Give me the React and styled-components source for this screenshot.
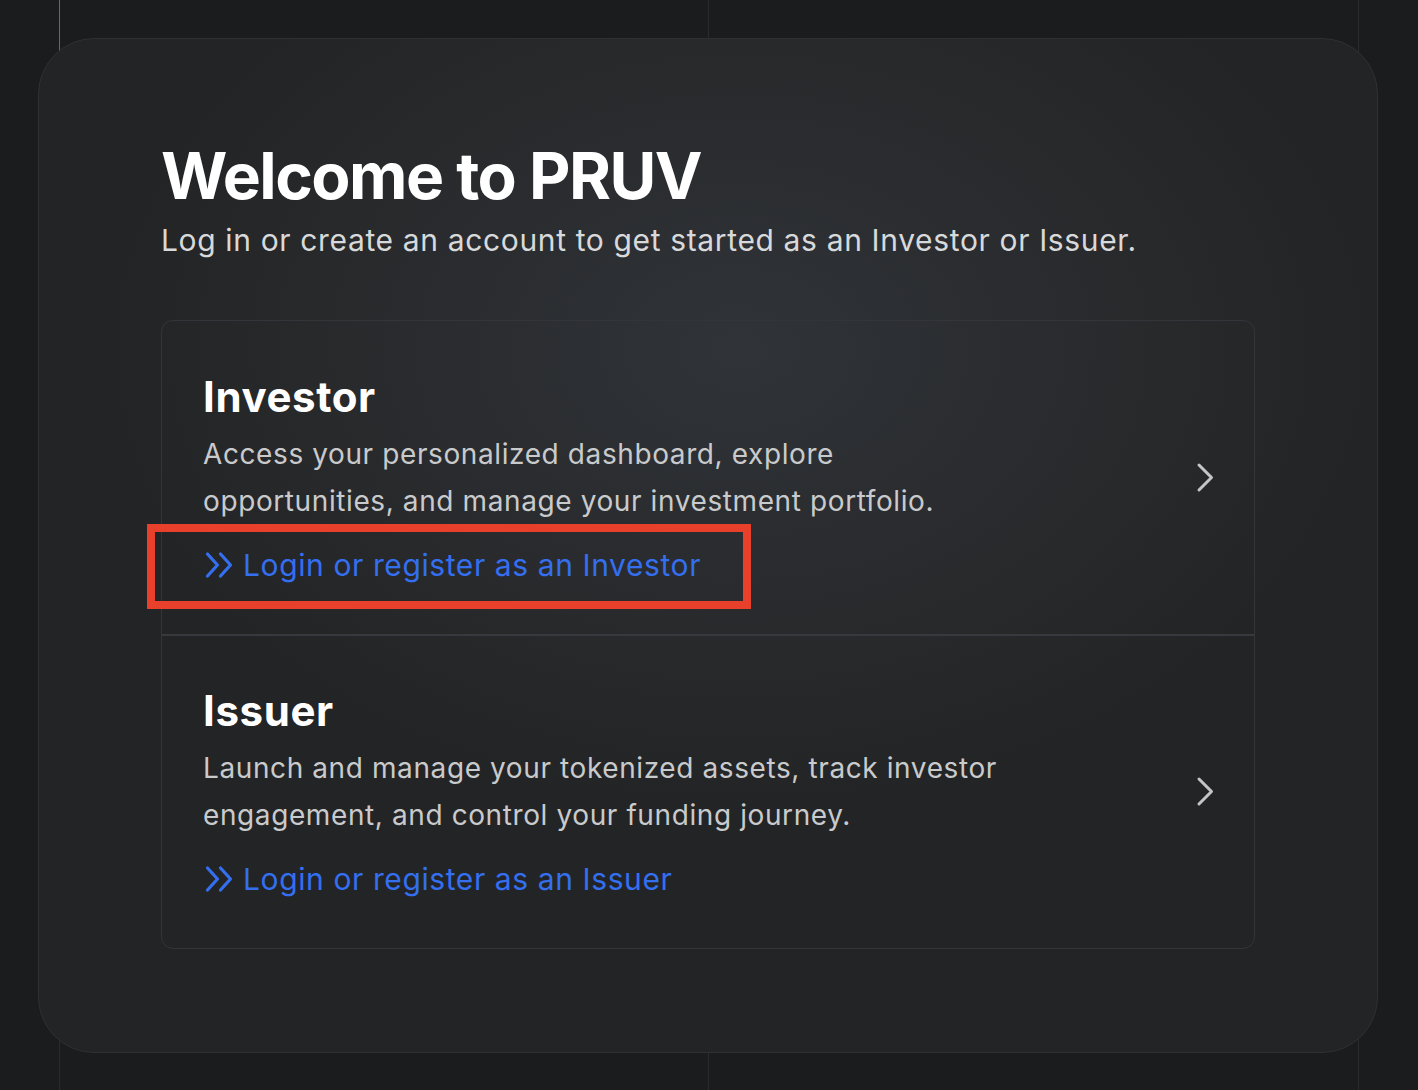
import styled, { createGlobalStyle } from 'styled-components'

// Estilos globais da página
const GlobalStyle = createGlobalStyle`
  html, body {
    margin: 0;
    padding: 0;
    background: #1b1c1d;
  }
  * {
    box-sizing: border-box;
  }
`

// Fundo com as linhas verticais da grade
const Page = styled.div`
  width: 1418px;
  height: 1090px;
  padding: 38px;
  font-family: 'Inter', 'Noto Sans', sans-serif;
  background-color: #1b1c1d;
  background-image:
    linear-gradient(to bottom, #3d6fb3 0, #3d6fb3 52px, transparent 52px),
    linear-gradient(#2a2b2d, #2a2b2d),
    linear-gradient(#2a2b2d, #2a2b2d),
    linear-gradient(#2a2b2d, #2a2b2d);
  background-size: 1px 100%, 1px 100%, 1px 100%, 1px 100%;
  background-position: 59px 0, 59px 0, 708px 0, 1358px 0;
  background-repeat: no-repeat;
`

// Cartão principal
const Card = styled.main`
  width: 1340px;
  height: 1015px;
  padding: 101px 122px 0;
  border: 1px solid #2f3032;
  border-radius: 56px;
  background:
    radial-gradient(ellipse 640px 460px at 700px 310px, rgba(52, 56, 62, 0.75), rgba(40, 42, 46, 0) 100%),
    #232425;
`

const Title = styled.h1`
  margin: 0;
  font-size: 64px;
  line-height: 72px;
  font-weight: 700;
  letter-spacing: -1.5px;
  color: #ffffff;
`

const Subtitle = styled.p`
  margin: 8px 0 0;
  font-size: 30px;
  line-height: 40px;
  letter-spacing: 0.64px;
  color: #d8d9da;
`

// Lista de opções
const Options = styled.div`
  margin-top: 60px;
  border: 1px solid #33353a;
  border-radius: 12px;
`

const Option = styled.section`
  display: flex;
  align-items: center;
  justify-content: space-between;
  height: ${(p) => p.$height}px;
  padding: 0 38px 0 41px;
  border-top: ${(p) => (p.$first ? 'none' : '2px solid #36393d')};
`

const OptionBody = styled.div`
  display: flex;
  flex-direction: column;
`

const OptionTitle = styled.h2`
  margin: 0;
  font-size: 42px;
  line-height: 52px;
  font-weight: 700;
  letter-spacing: 0.6px;
  color: #ffffff;
`

const OptionText = styled.p`
  margin: 8px 0 0;
  max-width: 808px;
  font-size: 28px;
  line-height: 47px;
  letter-spacing: 0.6px;
  color: #c9cacc;
`

const LinkRow = styled.a`
  position: relative;
  display: inline-flex;
  align-items: center;
  align-self: flex-start;
  gap: 9px;
  margin-top: 20px;
  font-size: 30px;
  line-height: 40px;
  letter-spacing: 0.6px;
  color: #346ff0;
  text-decoration: none;
  cursor: pointer;

  svg {
    margin-left: 2px;
  }

  ${(p) =>
    p.$marked &&
    `
    &::after {
      content: '';
      position: absolute;
      left: -56px;
      right: -50px;
      top: -21px;
      bottom: -24px;
      border: 8px solid #e8402a;
      pointer-events: none;
    }
  `}
`

const DoubleChevron = () => (
  <svg width="29" height="28" viewBox="0 0 29 28" fill="none" stroke="currentColor"
    strokeWidth="3.2" strokeLinecap="round" strokeLinejoin="round">
    <path d="M2.5 3 L12.5 14 L2.5 25" />
    <path d="M15.5 3 L25.5 14 L15.5 25" />
  </svg>
)

const ArrowIcon = styled.svg`
  flex: none;
  color: #c4c5c7;
`

const Arrow = () => (
  <ArrowIcon width="20" height="32" viewBox="0 0 20 32" fill="none" stroke="currentColor"
    strokeWidth="3" strokeLinecap="round" strokeLinejoin="round">
    <path d="M3 3 L15.5 15.5 L3 28" />
  </ArrowIcon>
)

const options = [
  {
    title: 'Investor',
    text: 'Access your personalized dashboard, explore opportunities, and manage your investment portfolio.',
    link: 'Login or register as an Investor',
    height: 313,
    marked: true
  },
  {
    title: 'Issuer',
    text: 'Launch and manage your tokenized assets, track investor engagement, and control your funding journey.',
    link: 'Login or register as an Issuer',
    height: 314
  }
]

const App = () => {
  return (
    <>
      <GlobalStyle />
      <Page>
        <Card>
          <Title>Welcome to PRUV</Title>
          <Subtitle>Log in or create an account to get started as an Investor or Issuer.</Subtitle>

          <Options>
            {options.map((opt, index) => (
              <Option key={opt.title} $first={index === 0} $height={opt.height}>
                <OptionBody>
                  <OptionTitle>{opt.title}</OptionTitle>
                  <OptionText>{opt.text}</OptionText>
                  <LinkRow $marked={opt.marked}>
                    <DoubleChevron />
                    {opt.link}
                  </LinkRow>
                </OptionBody>
                <Arrow />
              </Option>
            ))}
          </Options>
        </Card>
      </Page>
    </>
  )
}

export default App
